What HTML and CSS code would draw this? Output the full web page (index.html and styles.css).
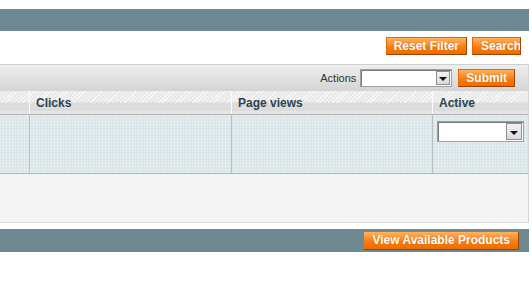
FILE: index.html
```html
<!DOCTYPE html>
<html lang="en">
<head>
    <meta charset="UTF-8">
    <meta name="viewport" content="width=device-width, initial-scale=1.0">
    <title>Products grid</title>
    <link rel="stylesheet" href="styles.css">
</head>
<body>
<div class="page">
    <div class="content-header"></div>

    <div class="filter-actions">
        <button class="btn">Reset Filter</button>
        <button class="btn btn-search">Search</button>
    </div>

    <div class="grid">
        <div class="massaction">
            <label class="massaction__label">Actions</label>
            <div class="select select--actions"><span class="select__arrow"></span></div>
            <button class="btn">Submit</button>
        </div>

        <div class="grid__row headings">
            <div class="cell"></div>
            <div class="cell">Clicks</div>
            <div class="cell">Page views</div>
            <div class="cell">Active</div>
        </div>

        <div class="grid__row filter">
            <div class="cell"></div>
            <div class="cell"></div>
            <div class="cell"></div>
            <div class="cell">
                <div class="select select--active"><span class="select__arrow"></span></div>
            </div>
        </div>

        <div class="grid__empty"></div>
    </div>

    <div class="footer-bar">
        <button class="btn btn-large">View Available Products</button>
    </div>
</div>
</body>
</html>
```

FILE: styles.css
```css
body {
  margin: 0;
  font-family: "Liberation Sans", Arial, sans-serif;
  font-size: 12px;
  color: #2f2f2f;
  background: #fff;
}

.page {
  width: 529px;
  padding-top: 9px;
}

.content-header {
  height: 22px;
  background: #6f8992;
}

/* orange magento-ish buttons */
.btn {
  display: inline-block;
  box-sizing: border-box;
  height: 18px;
  margin: 0;
  padding: 0 7px;
  border: 1px solid;
  border-color: #ed6502 #a04300 #a04300 #ed6502;
  background: linear-gradient(#ffb35f 0%, #fc9030 35%, #f67b0c 60%, #ee6c00 100%);
  color: #fff;
  font-family: "Liberation Sans", Arial, sans-serif;
  font-size: 12px;
  font-weight: bold;
  line-height: 16px;
  white-space: nowrap;
  text-shadow: 0 0 1px #c85a00;
  cursor: pointer;
}

.btn-search {
  width: 49px;
  padding: 0 0 0 8px;
  text-align: left;
  overflow: hidden;
}

.btn-large {
  height: 19px;
  line-height: 17px;
  padding: 0 8px 0 8px;
}

.filter-actions {
  display: flex;
  justify-content: flex-end;
  gap: 5px;
  padding: 6px 8px 0 0;
}

.grid {
  margin-top: 9px;
  border-top: 1px solid #cfcfcf;
  border-right: 1px solid #d4d4d4;
}

.massaction {
  height: 26px;
  display: flex;
  align-items: center;
  justify-content: flex-end;
  padding-right: 13px;
  background: linear-gradient(#eeeeee, #d4d4d4);
}

.massaction__label {
  margin-right: 4px;
  font-size: 11px;
  color: #333;
}

.select {
  box-sizing: border-box;
  position: relative;
  background: #fff;
  border: 1px solid #9aa0a4;
  box-shadow: inset 1px 1px 0 #7a7a7a;
}

.select--actions {
  width: 92px;
  height: 18px;
  margin-right: 6px;
}

.select--active {
  width: 87px;
  height: 21px;
  margin: 6px 0 0 4px;
}

.select__arrow {
  position: absolute;
  top: 1px;
  right: 1px;
  bottom: 1px;
  width: 14px;
  box-sizing: border-box;
  background: linear-gradient(#f2f2f2, #d9d9d9);
  border: 1px solid #8e8e8e;
}

.select--active .select__arrow {
  width: 16px;
}

.select__arrow::after {
  content: "";
  position: absolute;
  left: 50%;
  top: 50%;
  margin: -1px 0 0 -4px;
  border-left: 4px solid transparent;
  border-right: 4px solid transparent;
  border-top: 4px solid #111;
}

.grid__row {
  display: grid;
  grid-template-columns: 30px 202px 201px 1fr;
}

.cell {
  box-sizing: border-box;
  border-right: 1px solid #bdbdbd;
}

.cell:last-child {
  border-right: 0;
}

.headings {
  height: 24px;
  border-bottom: 1px solid #b4b4b4;
  box-sizing: border-box;
  background:
    repeating-linear-gradient(135deg, rgba(255, 255, 255, 0.7) 0 1px, transparent 1px 3px) 0 0 / 100% 12px no-repeat,
    linear-gradient(#e9e9e9 0, #e9e9e9 11px, #dcdcdc 11px, #dcdcdc 20px, #e4e4e4 20px);
}

.headings .cell {
  border-right-color: #fbfbfb;
  padding: 2px 0 0 6px;
  font-weight: bold;
  line-height: 21px;
  color: #2d444f;
}

.filter {
  height: 59px;
  box-sizing: border-box;
  border-bottom: 1px solid #b6b6b6;
  background-color: #d7e5e9;
  background-image:
    linear-gradient(90deg, rgba(255, 255, 255, 0.28) 1px, transparent 1px),
    linear-gradient(rgba(255, 255, 255, 0.28) 1px, transparent 1px);
  background-size: 3px 3px;
}

.grid__empty {
  height: 49px;
  box-sizing: border-box;
  background: #f4f4f4;
  border-bottom: 1px solid #d6dfe0;
}

.footer-bar {
  margin-top: 6px;
  height: 23px;
  display: flex;
  align-items: center;
  justify-content: flex-end;
  padding-right: 10px;
  background: #6f8992;
}
```
